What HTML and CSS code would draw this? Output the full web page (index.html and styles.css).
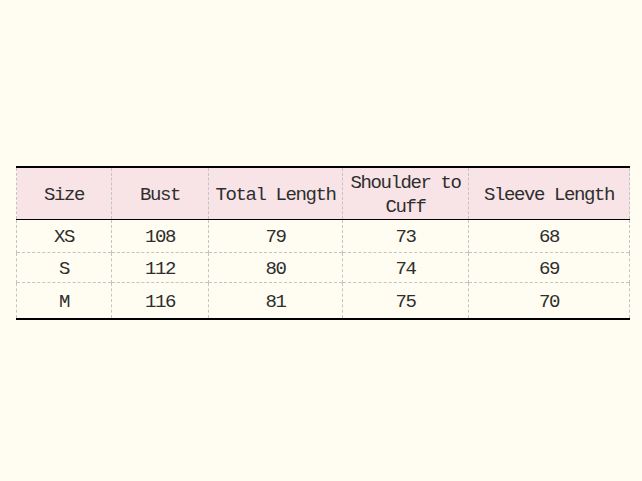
FILE: index.html
```html
<!DOCTYPE html>
<html>
<head>
<meta charset="utf-8">
<link rel="stylesheet" href="styles.css">
</head>
<body>
<div class="page">
<table class="size-table">
  <colgroup>
    <col class="c1"><col class="c2"><col class="c3"><col class="c4"><col class="c5">
  </colgroup>
  <thead>
    <tr class="head">
      <th>Size</th><th>Bust</th><th>Total Length</th><th>Shoulder to<br>Cuff</th><th>Sleeve Length</th>
    </tr>
  </thead>
  <tbody>
    <tr class="r1"><td>XS</td><td>108</td><td>79</td><td>73</td><td>68</td></tr>
    <tr class="r2"><td>S</td><td>112</td><td>80</td><td>74</td><td>69</td></tr>
    <tr class="r3"><td>M</td><td>116</td><td>81</td><td>75</td><td>70</td></tr>
  </tbody>
</table>
</div>
</body>
</html>
```
FILE: styles.css
```css
html, body {
  margin: 0;
  padding: 0;
  background: #fffdf1;
}
.page {
  width: 642px;
  height: 481px;
  padding-top: 166px;
  padding-left: 16px;
  box-sizing: border-box;
}
.size-table {
  border-collapse: collapse;
  width: 613px;
  table-layout: fixed;
  border-top: 2px solid #000;
  border-bottom: 2px solid #000;
  font-family: "Liberation Mono", "DejaVu Sans Mono", monospace;
  font-size: 19px;
  letter-spacing: -1.4px;
  color: #2e2e2e;
}
.c1 { width: 95px; }
.c2 { width: 97px; }
.c3 { width: 134px; }
.c4 { width: 126px; }
.c5 { width: 161px; }
.size-table th,
.size-table td {
  border-left: 1px dashed #c4c4c4;
  border-right: 1px dashed #c4c4c4;
  border-top: 1px dashed #c4c4c4;
  text-align: center;
  vertical-align: middle;
  padding: 2px 0 0;
  font-weight: normal;
}
.head th {
  background: #f8e3e6;
  height: 49px;
  line-height: 24px;
  border-top: none;
  border-bottom: 1px solid #000;
}
.r1 td { height: 30px; border-top: none; }
.r2 td { height: 27px; }
.r3 td { height: 33px; }
```
